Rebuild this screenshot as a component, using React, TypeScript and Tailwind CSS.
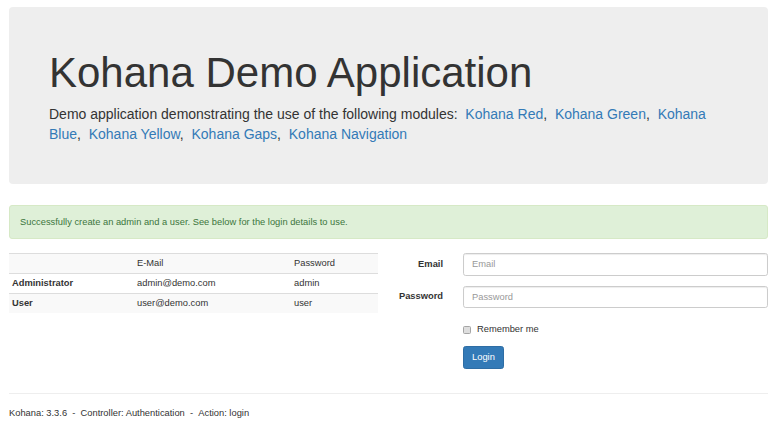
import { Fragment } from 'react'

const modules = [
  'Kohana Red',
  'Kohana Green',
  'Kohana Blue',
  'Kohana Yellow',
  'Kohana Gaps',
  'Kohana Navigation',
]

const users = [
  { role: 'Administrator', email: 'admin@demo.com', password: 'admin' },
  { role: 'User', email: 'user@demo.com', password: 'user' },
]

export default function App() {
  return (
    <div className="min-h-[425px] w-[777px] bg-white px-[9px] pt-[7px] font-['Liberation_Sans',Arial,sans-serif] text-[9.33px] leading-[13.33px] text-[#333]">
      {/* Jumbotron */}
      <div className="rounded-[4px] bg-[#eee] px-[40px] pt-[32px] pb-[30px]">
        <h1 className="mt-[11px] mb-[8px] text-[42px] leading-[46px] font-normal">
          Kohana Demo Application
        </h1>
        <p className="mb-[10px] text-[14px] leading-[20px]">
          Demo application demonstrating the use of the following modules:&nbsp;{' '}
          {modules.map((name, i) => (
            <Fragment key={name}>
              <a href="#" className="text-[#337ab7]">
                {name}
              </a>
              {i < modules.length - 1 && <>,&nbsp; </>}
            </Fragment>
          ))}
        </p>
      </div>

      {/* Alert */}
      <div className="mt-[21px] rounded-[3px] border border-[#d6e9c6] bg-[#dff0d8] px-[10px] py-[10px] leading-[12px] text-[#3c763d]">
        Successfully create an admin and a user. See below for the login details to use.
      </div>

      <div className="mt-[14px] flex">
        {/* Credentials table */}
        <div className="w-[369px]">
          <div className="grid h-[20px] grid-cols-[125px_157px_1fr] items-center border-t border-[#ddd] bg-[#f9f9f9]">
            <div className="px-[3px]"></div>
            <div className="px-[3px]">E-Mail</div>
            <div className="px-[3px]">Password</div>
          </div>
          {users.map((u, i) => (
            <div
              key={u.role}
              className={`grid h-[20px] grid-cols-[125px_157px_1fr] items-center border-t border-[#ddd] ${i % 2 === 1 ? 'bg-[#f9f9f9]' : 'bg-white'}`}
            >
              <div className="px-[3px] font-bold">{u.role}</div>
              <div className="px-[3px]">{u.email}</div>
              <div className="px-[3px]">{u.password}</div>
            </div>
          ))}
        </div>

        {/* Login form */}
        <form className="grid flex-1 grid-cols-[65px_1fr] gap-x-[20px]">
          <label className="flex h-[22.67px] items-center justify-end font-bold">Email</label>
          <input
            placeholder="Email"
            className="h-[22.67px] w-full rounded-[2.67px] border border-[#ccc] bg-white px-[8px] text-[9.33px] shadow-[inset_0_1px_1px_rgba(0,0,0,0.075)] outline-none placeholder:text-[#999]"
          />
          <label className="mt-[10px] flex h-[22.67px] items-center justify-end font-bold">
            Password
          </label>
          <input
            type="password"
            placeholder="Password"
            className="mt-[10px] h-[22.67px] w-full rounded-[2.67px] border border-[#ccc] bg-white px-[8px] text-[9.33px] shadow-[inset_0_1px_1px_rgba(0,0,0,0.075)] outline-none placeholder:text-[#999]"
          />
          <div className="col-start-2 mt-[10px] flex h-[18px] items-center pt-[4.67px]">
            <span className="h-[8px] w-[8px] rounded-[1.5px] border border-[#a5a5a5] bg-[#dedede]"></span>
            <span className="ml-[6px]">Remember me</span>
          </div>
          <div className="col-start-2 mt-[10px]">
            <button
              type="button"
              className="h-[22.67px] rounded-[2.67px] border border-[#2e6da4] bg-[#337ab7] px-[8px] text-white"
            >
              Login
            </button>
          </div>
        </form>
      </div>

      {/* Footer */}
      <hr className="mt-[24px] mb-[13px] border-t border-[#eee]" />
      <p>Kohana: 3.3.6&nbsp; - &nbsp;Controller: Authentication&nbsp; - &nbsp;Action: login</p>
    </div>
  )
}
